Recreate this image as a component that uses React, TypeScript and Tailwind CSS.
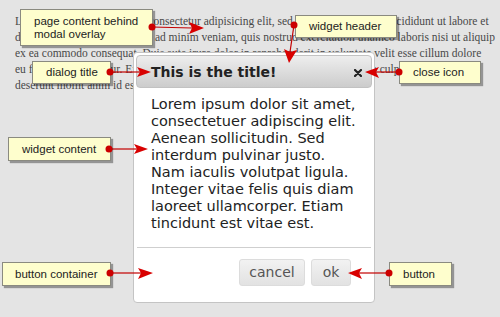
import React from "react";

const bgLines = [
  "Lorem ipsum dolor sit amet, consectetur adipisicing elit, sed do eiusmod tempor incididunt ut labore et",
  "dolore magna aliqua. Ut enim ad minim veniam, quis nostrud exercitation ullamco laboris nisi ut aliquip",
  "ex ea commodo consequat. Duis aute irure dolor in reprehenderit in voluptate velit esse cillum dolore",
  "eu fugiat nulla pariatur. Excepteur sint occaecat cupidatat non proident, sunt in culpa qui officia",
  "deserunt mollit anim id est laborum.",
];

const contentLines = [
  "Lorem ipsum dolor sit amet,",
  "consectetuer adipiscing elit.",
  "Aenean sollicitudin. Sed",
  "interdum pulvinar justo.",
  "Nam iaculis volutpat ligula.",
  "Integer vitae felis quis diam",
  "laoreet ullamcorper. Etiam",
  "tincidunt est vitae est.",
];

function Note({ className, children }: { className: string; children: React.ReactNode }) {
  return (
    <div
      className={
        "absolute flex items-center bg-[#fefecd] border border-[#8a8a80] shadow-[2px_2px_1px_rgba(0,0,0,0.35)] text-[11.5px] leading-[13px] text-[#222] " +
        className
      }
      style={{ fontFamily: "'Liberation Sans', Arial, sans-serif" }}
    >
      {children}
    </div>
  );
}

export default function App() {
  return (
    <div className="relative w-[500px] h-[317px] overflow-hidden bg-[#e4e4e4]">
      {/* page content behind overlay */}
      <div
        className="pt-[13px] pl-[15px] text-[11.5px] leading-[16px] text-[#484848] whitespace-nowrap"
        style={{ fontFamily: "'Liberation Serif', 'Times New Roman', serif" }}
      >
        {bgLines.map((l, i) => (
          <div key={i}>{l}</div>
        ))}
      </div>

      {/* dialog */}
      <div
        className="absolute left-[133px] top-[52px] w-[242px] h-[251px] bg-white border border-[#c4c4c4] rounded-[4px] flex flex-col p-[2px]"
        style={{ fontFamily: "'DejaVu Sans', Verdana, sans-serif" }}
      >
        <div className="h-[33px] flex items-center justify-between pl-[14px] pr-[9px] pt-[2px] rounded-[4px] border border-[#c2c2c2] bg-gradient-to-b from-[#eeeeee] to-[#cccccc]">
          <span className="text-[14px] font-bold text-[#222]">This is the title!</span>
          <svg width="8" height="8" viewBox="0 0 8 8" aria-label="close">
            <path d="M1 1 L7 7 M7 1 L1 7" stroke="#222" strokeWidth="2.2" strokeLinecap="round" />
          </svg>
        </div>
        <div className="pt-[8px] pl-[15px] text-[14.5px] leading-[17px] text-[#222] h-[159px] whitespace-nowrap">
          {contentLines.map((l, i) => (
            <div key={i}>{l}</div>
          ))}
        </div>
        <div className="mx-[1px] border-t border-[#cfcfcf] flex justify-end gap-[6px] pt-[11px] pr-[20px]">
          <button className="w-[66px] h-[27px] rounded-[3px] border border-[#dcdcdc] bg-gradient-to-b from-[#f2f2f2] to-[#e2e2e2] text-[14px] text-[#555]">
            cancel
          </button>
          <button className="w-[40px] h-[27px] rounded-[3px] border border-[#dcdcdc] bg-gradient-to-b from-[#f2f2f2] to-[#e2e2e2] text-[14px] text-[#555]">
            ok
          </button>
        </div>
      </div>

      {/* annotation arrows */}
      <svg className="absolute inset-0" width="500" height="317" viewBox="0 0 500 317">
        <g stroke="#c40000" strokeWidth="1.2" fill="none">
          <line x1="152" y1="27" x2="192" y2="28" />
          <line x1="294" y1="25" x2="290" y2="52" />
          <line x1="110" y1="72" x2="140" y2="72" />
          <line x1="399" y1="72" x2="376" y2="72" />
          <line x1="109" y1="149" x2="137" y2="149" />
          <line x1="110" y1="273" x2="141" y2="273" />
          <line x1="389" y1="273" x2="359" y2="273" />
        </g>
        <g fill="#d80000">
          <polygon points="204,28 189,22 192,28 189,34" />
          <polygon points="289,63 284,49 290,52 297,50" />
          <polygon points="151,72 137,67 140,72 137,77" />
          <polygon points="365,72 379,67 376,72 379,78" />
          <polygon points="148,149 134,144 137,149 134,154" />
          <polygon points="153,273 138,268 141,273 138,279" />
          <polygon points="348,273 362,268 359,273 362,279" />
        </g>
      </svg>

      {/* notes */}
      <Note className="left-[20px] top-[9px] w-[133px] h-[37px] pl-[13px]">
        <div>
          page content behind
          <br />
          modal overlay
        </div>
      </Note>
      <Note className="left-[295px] top-[15px] w-[102px] h-[23px] pl-[13px]">widget header</Note>
      <Note className="left-[32px] top-[61px] w-[79px] h-[23px] pl-[13px]">dialog title</Note>
      <Note className="left-[399px] top-[61px] w-[82px] h-[23px] pl-[13px]">close icon</Note>
      <Note className="left-[8px] top-[137px] w-[103px] h-[24px] pl-[13px]">widget content</Note>
      <Note className="left-[2px] top-[262px] w-[109px] h-[24px] pl-[12px]">button container</Note>
      <Note className="left-[389px] top-[262px] w-[63px] h-[24px] pl-[13px]">button</Note>

      {/* dots drawn on top of note borders */}
      <svg className="absolute inset-0 pointer-events-none" width="500" height="317" viewBox="0 0 500 317">
        <g fill="#cc0000">
          <circle cx="152" cy="27" r="3.5" />
          <circle cx="294" cy="25" r="3.5" />
          <circle cx="110" cy="72" r="3.5" />
          <circle cx="399" cy="72" r="3.5" />
          <circle cx="109" cy="149" r="3.5" />
          <circle cx="110" cy="273" r="3.5" />
          <circle cx="389" cy="273" r="3.5" />
        </g>
      </svg>
    </div>
  );
}
